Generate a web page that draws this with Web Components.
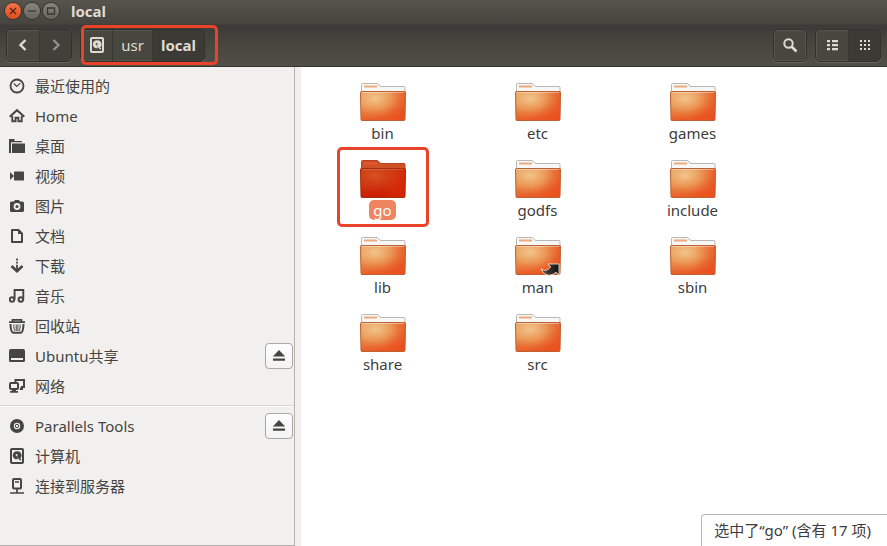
<!DOCTYPE html>
<html lang="zh-CN">
<head>
<meta charset="utf-8">
<title>local</title>
<style>
html,body{margin:0;height:100%}
body{font-family:"Noto Sans","Noto Sans CJK SC",sans-serif;font-size:15px;color:#3c3c3c;overflow:hidden}
</style>
</head>
<body>
<file-manager></file-manager>
<script>
const ICONS={
 close:'<path d="M5 5l6 6M11 5l-6 6" stroke="currentColor" stroke-width="1.3"/>',
 minimize:'<path d="M4 8h8" stroke="currentColor" stroke-width="1.3"/>',
 maximize:'<path d="M4.5 5h7v6h-7z" fill="none" stroke="currentColor" stroke-width="1.3"/>',
 back:'<path d="M10.5 3L5.5 8l5 5" fill="none" stroke="currentColor" stroke-width="2.4"/>',
 forward:'<path d="M5.5 3l5 5-5 5" fill="none" stroke="currentColor" stroke-width="2.4"/>',
 search:'<circle cx="6.5" cy="6.5" r="4.2" fill="none" stroke="currentColor" stroke-width="2"/><path d="M9.5 9.5l5 5" stroke="currentColor" stroke-width="2.6"/>',
 list:'<path d="M3 3h3v2.3H3zM8 3h6v2.3H8zM3 7h3v2.3H3zM8 7h6v2.3H8zM3 11h3v2.3H3zM8 11h6v2.3H8z" fill="currentColor"/>',
 grid:'<path d="M3 3h2v2H3zM7 3h2v2H7zM11 3h2v2h-2zM3 7h2v2H3zM7 7h2v2H7zM11 7h2v2h-2zM3 11h2v2H3zM7 11h2v2H7zM11 11h2v2h-2z" fill="currentColor"/>',
 disk:'<rect x="2" y="1" width="12" height="14" rx="1" fill="none" stroke="currentColor" stroke-width="2"/><path d="M8 3.3a4 4 0 1 0 1 7.8L7.3 8.2l3.7 2.2A4 4 0 0 0 8 3.3z" fill="currentColor"/><circle cx="7.6" cy="7" r="1" fill="var(--hole,#f1f0ef)"/><path d="M8.8 9l3 3.3" stroke="currentColor" stroke-width="1.5"/>',
 recent:'<circle cx="8" cy="8" r="6.5" fill="none" stroke="currentColor" stroke-width="1.8"/><path d="M4.8 5.5L7.7 8.4l3.6-3.3" fill="none" stroke="currentColor" stroke-width="1.2"/>',
 home:'<path d="M.7 8.8L8 2.2l7.3 6.6" fill="none" stroke="currentColor" stroke-width="2"/><path d="M3.3 8v5.3h3.3V9.8h2.8v3.5h3.3V8" fill="none" stroke="currentColor" stroke-width="1.9"/>',
 desktop:'<path d="M0 1h5.5v2H13v1.3H2V15H0z" fill="currentColor"/><path d="M3 5.5h13V15H3z" fill="currentColor"/>',
 video:'<path d="M1 4l4 4-4 4z" fill="currentColor"/><rect x="5" y="3.5" width="10" height="9" rx=".7" fill="currentColor"/>',
 camera:'<path d="M2.500 3.500H5L6 2h4l1 1.500h2.500A1.500 1.500 0 0 1 15 5v7.500a1.500 1.500 0 0 1-1.500 1.500h-11A1.500 1.500 0 0 1 1 12.500V5a1.500 1.500 0 0 1 1.500-1.500z" fill="currentColor"/><circle cx="8" cy="8.500" r="2.500" fill="currentColor" stroke="#f1f0ef" stroke-width="1.800"/>',
 document:'<path d="M3 2h6.500L13 5.500V14H3z" fill="none" stroke="currentColor" stroke-width="2" stroke-linejoin="round"/><path d="M9 2v4h4z" fill="currentColor"/>',
 download:'<path d="M8 .5v2M8 3.700v1.800M8 6.700v5.500" stroke="currentColor" stroke-width="1.800"/><path d="M2.500 8L8 13.300 13.500 8" fill="none" stroke="currentColor" stroke-width="2.600"/>',
 music:'<circle cx="3" cy="11.500" r="2.200" fill="none" stroke="currentColor" stroke-width="2"/><circle cx="11.800" cy="11.500" r="2.200" fill="none" stroke="currentColor" stroke-width="2"/><path d="M5.600 11.500V2H14.300v9.500" fill="none" stroke="currentColor" stroke-width="1.900"/>',
 trash:'<path d="M0 4.200h16M3.500 4V1.800h9V4" fill="none" stroke="currentColor" stroke-width="1.800"/><path d="M1.500 6c.1 5 .6 8.800 3 8.800h7c2.400 0 2.900-3.800 3-8.800" fill="none" stroke="currentColor" stroke-width="2"/><path d="M5 6.500c-.5 2.500 0 5 1 6.500M11 6.500c.5 2.500 0 5-1 6.500M7.200 6.500V13M8.900 6.500V13" fill="none" stroke="currentColor"/>',
 drive:'<path fill-rule="evenodd" d="M2 1h12a2 2 0 0 1 2 2v9.500a1.500 1.500 0 0 1-1.500 1.500h-13A1.500 1.500 0 0 1 0 12.500V3a2 2 0 0 1 2-2zm0 9v2h12v-2z" fill="currentColor"/>',
 network:'<path d="M6.500 4V2H15v7h-3" fill="none" stroke="currentColor" stroke-width="2"/><path d="M11.500 9H14v3h-3.500z" fill="currentColor"/><rect x="1" y="5" width="8" height="6" rx="1" fill="none" stroke="currentColor" stroke-width="2"/><path d="M3 11h4v2h2v1.800H1V13h2z" fill="currentColor"/>',
 disc:'<path fill-rule="evenodd" d="M8 1a7 7 0 1 1 0 14A7 7 0 0 1 8 1zm0 3.800a3.200 3.200 0 1 0 0 6.400 3.200 3.200 0 0 0 0-6.400z" fill="currentColor"/><circle cx="8" cy="8" r="1.700" fill="none" stroke="currentColor"/>',
 server:'<rect x="4" y="1" width="8" height="9.500" rx="1" fill="none" stroke="currentColor" stroke-width="2"/><path d="M6 4h4M8 11v4M1 15h14" stroke="currentColor" stroke-width="1.700"/>',
 eject:'<path d="M8 2l6.200 6.500H1.800zM2 10.500h12v2.300H2z" fill="currentColor"/>'
};
const define=(name,render)=>customElements.define(name,class extends HTMLElement{
 connectedCallback(){if(!this.shadowRoot)this.attachShadow({mode:'open'}).innerHTML=render(this);}
});

define('ui-icon',el=>`<style>:host{display:inline-flex;flex:none;width:16px;height:16px}svg{width:100%;height:100%}</style>
<svg viewBox="0 0 16 16" aria-hidden="true">${ICONS[el.getAttribute('name')]}</svg>`);

define('folder-icon',el=>{
 const sel=el.hasAttribute('selected');
 const front='M1.500 10.500q0-1 1-1h43q1 0 1 1L46 37q0 1.500-1 1.500H3q-1 0-1-1z';
 return `<style>:host{display:block;width:48px;height:40px}svg{display:block}</style>
<svg width="48" height="40" viewBox="0 0 48 40" aria-hidden="true">
<defs>
<linearGradient id="b" x1="0" y1="0" x2=".25" y2="1"><stop offset="0" stop-color="${sel?'#c2400f':'#e2aa70'}"/><stop offset=".5" stop-color="${sel?'#c8300c':'#e58d4b'}"/><stop offset="1" stop-color="${sel?'#cb1d02':'#ea5a24'}"/></linearGradient>
<radialGradient id="g" cx=".32" cy=".25" r=".75"><stop offset="0" stop-color="${sel?'#dc5a28':'#f6d09a'}" stop-opacity=".8"/><stop offset=".5" stop-color="${sel?'#d54018':'#f0a865'}" stop-opacity=".5"/><stop offset="1" stop-color="${sel?'#d72600':'#e95420'}" stop-opacity="0"/></radialGradient>
<linearGradient id="r"><stop offset=".5" stop-color="#e9471a" stop-opacity="0"/><stop offset="1" stop-color="${sel?'#d92200':'#e84d1d'}" stop-opacity=".75"/></linearGradient>
</defs>
<path d="M2.500 13V2.500q0-1 1-1H18q1 0 2 1.500t2 1.500h23q1 0 1 1V13z" fill="${sel?'#cf5226':'#f7f7f5'}" stroke="${sel?'#b44423':'#b9b7b3'}"/>
<path d="M5 4.500h13" stroke="${sel?'#e4592f':'#edaa7e'}" stroke-width="2"/>
<path d="${front}" fill="url(#b)"/>
<path d="${front}" fill="url(#r)"/>
<path d="${front}" fill="url(#g)" stroke="${sel?'#a92b0e':'#bd6132'}"/>
<path d="M3 10.500h42" stroke="#fff" stroke-opacity="${sel?.15:.4}"/>
${el.hasAttribute('link')?'<defs><linearGradient id="k"><stop offset="0" stop-color="#8a5a45"/><stop offset=".4" stop-color="#3a3532"/><stop offset="1" stop-color="#111"/></linearGradient></defs><path d="M27 32.500q3.500 3.500 7.500.5l2.200-2L34 28h11v11l-3-2.700q-5 4.200-10 2.200-4-1.800-5-6z" fill="url(#k)" stroke="#eadfd4" stroke-width=".9"/>':''}
</svg>`;});

define('window-header',()=>`<style>
:host{display:block;background:linear-gradient(#56544b 0,#45443e 24px,#3c3b37 25px,#47463f 46px,#504f48);border-bottom:1px solid #35342f;color:#dfdbd2}
button{font:inherit;color:inherit;margin:0;padding:0;border:0;background:none;display:flex;align-items:center;justify-content:center}
.title{display:flex;align-items:center;height:22px;padding-left:5px;gap:3px}
.title button{width:16px;height:16px;border-radius:50%;background:linear-gradient(#88867e,#67655e);color:#393832;box-shadow:0 0 0 1px #35342f}
.title .close{background:linear-gradient(#f37449,#df4d1e);color:#562412}
h1{font-size:15px;line-height:22px;margin:0 0 0 9px;font-weight:700}
.bar{display:flex;align-items:center;box-sizing:border-box;height:44px;padding:2px 6px 0;gap:8px}
.group{display:flex;border:1px solid #32312c;border-radius:5px;box-shadow:0 1px 0 #66655b,inset 0 0 0 1px #57564e;background:#48473f}
.group button{height:31px;width:32px;box-sizing:border-box}
.group button+button{border-left:1px solid #393832}
.dim{background:#41403a;color:#918f86}
.on{background:#3b3a35;border-radius:0 4px 4px 0}
.path{position:relative}
.path .usr{width:40px}.path .loc{width:52px;font-weight:700}
.path .root{width:31px;--hole:#48473f}
.mark{position:absolute;left:0;top:-5px;right:-14px;bottom:-4px;border:3px solid #e9432a;border-radius:5px;pointer-events:none}
.space{flex:1}
</style>
<div class="title"><button class="close" aria-label="关闭"><ui-icon name="close"></ui-icon></button><button aria-label="最小化"><ui-icon name="minimize"></ui-icon></button><button aria-label="最大化"><ui-icon name="maximize"></ui-icon></button><h1>local</h1></div>
<div class="bar">
<div class="group"><button aria-label="后退"><ui-icon name="back"></ui-icon></button><button class="dim" aria-label="前进"><ui-icon name="forward"></ui-icon></button></div>
<nav class="group path"><button class="root" aria-label="根目录"><ui-icon name="disk"></ui-icon></button><button class="usr">usr</button><button class="loc on">local</button><span class="mark"></span></nav>
<span class="space"></span>
<div class="group"><button aria-label="搜索"><ui-icon name="search"></ui-icon></button></div>
<div class="group"><button aria-label="列表"><ui-icon name="list"></ui-icon></button><button class="on" aria-label="图标"><ui-icon name="grid"></ui-icon></button></div>
</div>`);

define('place-item',el=>`<style>
:host{display:flex;align-items:center;height:30px;padding:0 1px 0 9px}
a{flex:1;display:flex;align-items:center;gap:10px;color:#444442;text-decoration:none;line-height:20px}
ui-icon{color:#454543;--hole:#f1f0ef}
button{width:28px;height:26px;padding:0;border:1px solid #aaa8a4;border-radius:4px;background:linear-gradient(#fff,#f4f3f2);color:#3c3c3a;display:flex;align-items:center;justify-content:center}
</style><a href="#"><ui-icon name="${el.getAttribute('icon')}"></ui-icon><span><slot></slot></span></a>${el.hasAttribute('ejectable')?'<button aria-label="弹出"><ui-icon name="eject"></ui-icon></button>':''}`);

define('places-sidebar',()=>`<style>
:host{display:block;box-sizing:border-box;background:#f1f0ef;border-right:1px solid #b5b3b0;padding-top:4px}
hr{border:0;border-top:1px solid #d8d6d3;border-bottom:1px solid #fff;margin:4px 0}
</style><nav>
<place-item icon="recent">最近使用的</place-item>
<place-item icon="home">Home</place-item>
<place-item icon="desktop">桌面</place-item>
<place-item icon="video">视频</place-item>
<place-item icon="camera">图片</place-item>
<place-item icon="document">文档</place-item>
<place-item icon="download">下载</place-item>
<place-item icon="music">音乐</place-item>
<place-item icon="trash">回收站</place-item>
<place-item icon="drive" ejectable>Ubuntu共享</place-item>
<place-item icon="network">网络</place-item>
<hr>
<place-item icon="disc" ejectable>Parallels Tools</place-item>
<place-item icon="disk">计算机</place-item>
<place-item icon="server">连接到服务器</place-item>
</nav>`);

define('file-item',el=>{const s=el.hasAttribute('selected');return `<style>
:host{display:flex;justify-content:center;height:77px}
button{position:relative;font:inherit;color:inherit;border:0;background:none;padding:0;display:flex;flex-direction:column;align-items:center;align-self:flex-start;min-width:92px}
.label{line-height:20px;padding:0 4px;margin-top:1px;border-radius:5px}
.sel{background:#ee8560;color:#fff}
.mark{position:absolute;left:0;right:0;top:-12px;bottom:-7px;border:3px solid #e9432a;border-radius:5px}
</style><button><folder-icon ${s?'selected':''} ${el.hasAttribute('link')?'link':''}></folder-icon><span class="label ${s?'sel':''}"><slot></slot></span>${s?'<span class="mark"></span>':''}</button>`;});

define('file-grid',()=>`<style>
:host{display:grid;grid-template-columns:repeat(auto-fill,155px);align-content:start;padding:15px 0 0 4px;background:#fff}
</style><slot></slot>`);

define('status-bubble',()=>`<style>
:host{position:absolute;right:0;bottom:0;box-sizing:border-box;height:32px;line-height:31px;padding:0 16px 0 12px;border:1px solid #b9b7b4;border-right:0;border-bottom:0;border-radius:4px 0 0 0;background:#fff;white-space:nowrap}
</style><slot></slot>`);

define('file-manager',()=>`<style>
:host{display:grid;grid-template-rows:auto 1fr;height:100vh;position:relative;background:#fff}
main{display:flex;min-height:0}
places-sidebar{flex:0 0 295px;border-bottom:1px solid #b5b3b0}
file-grid{flex:1;border-left:6px solid #f1f0ef}
</style>
<window-header></window-header>
<main><places-sidebar></places-sidebar>
<file-grid><file-item>bin</file-item><file-item>etc</file-item><file-item>games</file-item><file-item selected>go</file-item><file-item>godfs</file-item><file-item>include</file-item><file-item>lib</file-item><file-item link>man</file-item><file-item>sbin</file-item><file-item>share</file-item><file-item>src</file-item></file-grid></main>
<status-bubble role="status">选中了“go” (含有 17 项)</status-bubble>`);
</script>
</body>
</html>
